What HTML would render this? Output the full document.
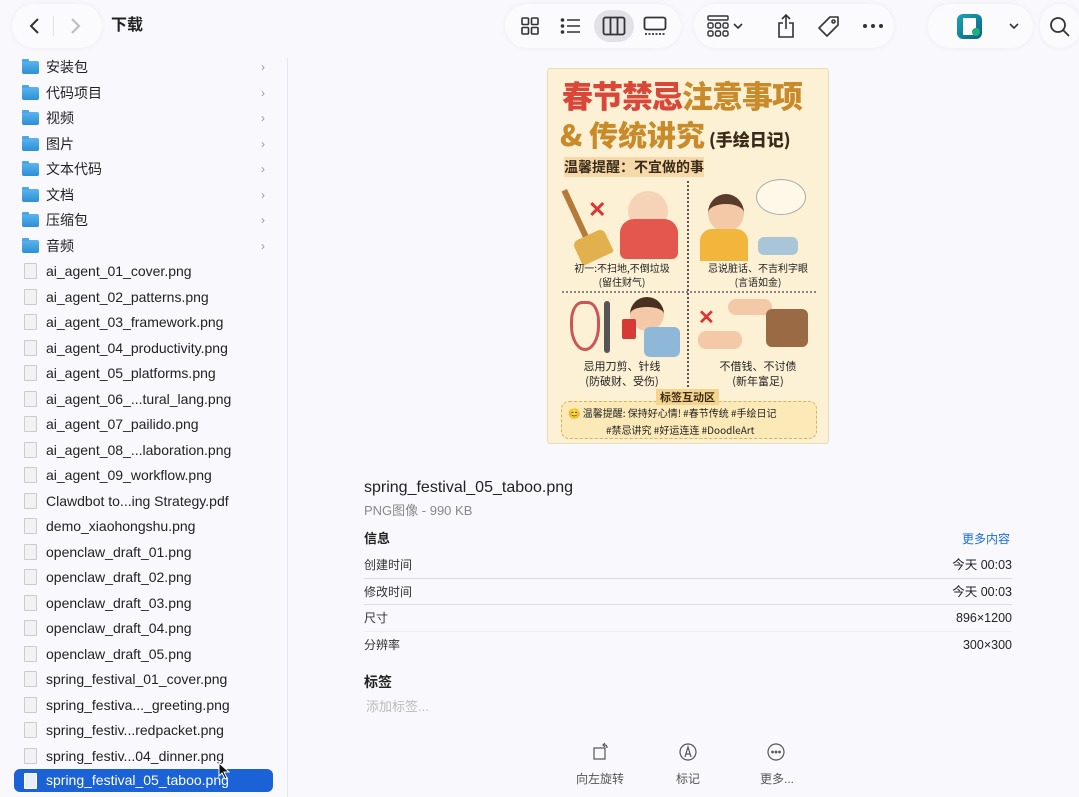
<!DOCTYPE html>
<html><head><meta charset="utf-8"><style>
*{margin:0;padding:0;box-sizing:border-box}
body{width:1079px;height:797px;background:#f9f9fd;font-family:"Liberation Sans","Noto Sans CJK SC",sans-serif;color:#222;position:relative;overflow:hidden}
.a{position:absolute}
.row{position:absolute;left:0;width:287px;height:24px;font-size:14px;line-height:24px}
.row .t{position:absolute;left:46px;top:0;color:#222;white-space:nowrap}
.row .fold{position:absolute;left:22px;top:6px;width:17px;height:13px;background:linear-gradient(#5ab4ee,#2e8fd6);border-radius:2px}
.row .fold:before{content:"";position:absolute;left:0;top:-2px;width:7px;height:3px;background:#4aa6e6;border-radius:1px 1px 0 0}
.row .doc{position:absolute;left:24px;top:4px;width:13px;height:16px;border:1px solid #ccc;background:#f2f2f4;border-radius:1px}
.row .chev{position:absolute;left:261px;top:0;color:#999;font-size:12px}
.sel{background:#1a62d6;border-radius:6px;left:14px;width:259px}
.sel .t{left:32px;color:#fff}
.sel .doc{left:10px;background:#e8eefa;border-color:#fff}
.lbl{font-size:12px;color:#333;line-height:16px}
.val{font-size:12.5px;color:#222;position:absolute;right:67px;line-height:16px}
.line{position:absolute;left:364px;width:648px;height:1px;background:#ddd}
.p{position:absolute;font-family:"Noto Sans CJK SC",sans-serif;white-space:nowrap}
</style></head><body>
<div class="a" style="left:12px;top:4px;width:90px;height:44px;border-radius:22px;background:#fbfbfe;box-shadow:0 0 6px rgba(0,0,0,.06)"></div>
<svg class="a" style="left:27px;top:17px" width="16" height="18"><path d="M11 2 L4 9 L11 16" stroke="#333" stroke-width="2" fill="none"/></svg>
<div class="a" style="left:53px;top:16px;width:1px;height:20px;background:#e2e2e6"></div>
<svg class="a" style="left:67px;top:17px" width="16" height="18"><path d="M5 2 L12 9 L5 16" stroke="#bbb" stroke-width="2" fill="none"/></svg>
<div class="a" style="left:111px;top:16px;font-size:16px;font-weight:bold;line-height:20px">下载</div>
<div class="a" style="left:505px;top:4px;width:176px;height:44px;border-radius:22px;background:#fbfbfe;box-shadow:0 0 6px rgba(0,0,0,.06)"></div>
<div class="a" style="left:694px;top:4px;width:200px;height:44px;border-radius:22px;background:#fbfbfe;box-shadow:0 0 6px rgba(0,0,0,.06)"></div>
<div class="a" style="left:928px;top:4px;width:105px;height:44px;border-radius:22px;background:#fbfbfe;box-shadow:0 0 6px rgba(0,0,0,.06)"></div>
<div class="a" style="left:1040px;top:4px;width:40px;height:44px;border-radius:22px;background:#fbfbfe;box-shadow:0 0 6px rgba(0,0,0,.06)"></div>
<div class="a" style="left:594px;top:10px;width:40px;height:32px;border-radius:16px;background:#e1e1e6"></div>
<svg class="a" style="left:520px;top:16px" width="20" height="20" fill="none" stroke="#333" stroke-width="1.6"><rect x="2" y="2" width="6.5" height="6.5" rx="1"/><rect x="11.5" y="2" width="6.5" height="6.5" rx="1"/><rect x="2" y="11.5" width="6.5" height="6.5" rx="1"/><rect x="11.5" y="11.5" width="6.5" height="6.5" rx="1"/></svg>
<svg class="a" style="left:560px;top:16px" width="22" height="20" stroke="#333" stroke-width="1.6"><path d="M7 4H20M7 10H20M7 16H20"/><circle cx="2.5" cy="4" r="1" fill="#333"/><circle cx="2.5" cy="10" r="1" fill="#333"/><circle cx="2.5" cy="16" r="1" fill="#333"/></svg>
<svg class="a" style="left:602px;top:16px" width="24" height="20" fill="none" stroke="#333" stroke-width="1.8"><rect x="1.5" y="1.5" width="21" height="17" rx="2"/><path d="M8.5 2V18M15.5 2V18"/></svg>
<svg class="a" style="left:643px;top:16px" width="24" height="20" fill="none" stroke="#333" stroke-width="1.8"><rect x="1.5" y="1.5" width="21" height="12" rx="2"/><path d="M2 18H22" stroke-dasharray="2 1.5"/></svg>
<svg class="a" style="left:707px;top:15px" width="22" height="22" fill="none" stroke="#333" stroke-width="1.4"><rect x="1" y="1" width="20" height="4" rx="1"/><rect x="1" y="8" width="5" height="5" rx="1.5"/><rect x="8.5" y="8" width="5" height="5" rx="1.5"/><rect x="16" y="8" width="5" height="5" rx="1.5"/><rect x="1" y="16" width="5" height="5" rx="1.5"/><rect x="8.5" y="16" width="5" height="5" rx="1.5"/><rect x="16" y="16" width="5" height="5" rx="1.5"/></svg>
<svg class="a" style="left:733px;top:22px" width="10" height="8"><path d="M1 2L5 6L9 2" stroke="#333" stroke-width="1.6" fill="none"/></svg>
<svg class="a" style="left:776px;top:13px" width="20" height="26" fill="none" stroke="#333" stroke-width="1.6"><path d="M10 2V16M6 6L10 2L14 6M7 10H3V24H17V10H13"/></svg>
<svg class="a" style="left:817px;top:15px" width="24" height="24" fill="none" stroke="#333" stroke-width="1.6"><path d="M13 2H21V10L10 21L2 13Z" stroke-linejoin="round"/><circle cx="16.5" cy="6.5" r="1.5"/></svg>
<svg class="a" style="left:862px;top:23px" width="22" height="6" fill="#333"><circle cx="3" cy="3" r="2"/><circle cx="11" cy="3" r="2"/><circle cx="19" cy="3" r="2"/></svg>
<div class="a" style="left:957px;top:14px;width:25px;height:25px;border-radius:6px;background:linear-gradient(135deg,#19a7b0,#0c5f8a)"></div>
<div class="a" style="left:963px;top:18px;width:13px;height:17px;background:#fff;border-radius:1px"></div>
<div class="a" style="left:972px;top:28px;width:8px;height:8px;border-radius:50%;background:#1eb07a"></div>
<svg class="a" style="left:1009px;top:22px" width="10" height="8"><path d="M1 2L5 6L9 2" stroke="#333" stroke-width="1.6" fill="none"/></svg>
<svg class="a" style="left:1049px;top:16px" width="22" height="22" fill="none" stroke="#333" stroke-width="1.8"><circle cx="9" cy="9" r="7"/><path d="M14 14L20 20"/></svg>
<div class="a" style="left:287px;top:58px;width:1px;height:739px;background:#e6e6ee"></div>
<div class="row" style="top:55px"><div class="fold"></div><span class="t">安装包</span><span class="chev">›</span></div>
<div class="row" style="top:81px"><div class="fold"></div><span class="t">代码项目</span><span class="chev">›</span></div>
<div class="row" style="top:106px"><div class="fold"></div><span class="t">视频</span><span class="chev">›</span></div>
<div class="row" style="top:132px"><div class="fold"></div><span class="t">图片</span><span class="chev">›</span></div>
<div class="row" style="top:157px"><div class="fold"></div><span class="t">文本代码</span><span class="chev">›</span></div>
<div class="row" style="top:183px"><div class="fold"></div><span class="t">文档</span><span class="chev">›</span></div>
<div class="row" style="top:208px"><div class="fold"></div><span class="t">压缩包</span><span class="chev">›</span></div>
<div class="row" style="top:234px"><div class="fold"></div><span class="t">音频</span><span class="chev">›</span></div>
<div class="row" style="top:259px"><div class="doc"></div><span class="t">ai_agent_01_cover.png</span></div>
<div class="row" style="top:285px"><div class="doc"></div><span class="t">ai_agent_02_patterns.png</span></div>
<div class="row" style="top:310px"><div class="doc"></div><span class="t">ai_agent_03_framework.png</span></div>
<div class="row" style="top:336px"><div class="doc"></div><span class="t">ai_agent_04_productivity.png</span></div>
<div class="row" style="top:361px"><div class="doc"></div><span class="t">ai_agent_05_platforms.png</span></div>
<div class="row" style="top:387px"><div class="doc"></div><span class="t">ai_agent_06_...tural_lang.png</span></div>
<div class="row" style="top:412px"><div class="doc"></div><span class="t">ai_agent_07_pailido.png</span></div>
<div class="row" style="top:438px"><div class="doc"></div><span class="t">ai_agent_08_...laboration.png</span></div>
<div class="row" style="top:463px"><div class="doc"></div><span class="t">ai_agent_09_workflow.png</span></div>
<div class="row" style="top:489px"><div class="doc"></div><span class="t">Clawdbot to...ing Strategy.pdf</span></div>
<div class="row" style="top:514px"><div class="doc"></div><span class="t">demo_xiaohongshu.png</span></div>
<div class="row" style="top:540px"><div class="doc"></div><span class="t">openclaw_draft_01.png</span></div>
<div class="row" style="top:565px"><div class="doc"></div><span class="t">openclaw_draft_02.png</span></div>
<div class="row" style="top:591px"><div class="doc"></div><span class="t">openclaw_draft_03.png</span></div>
<div class="row" style="top:616px"><div class="doc"></div><span class="t">openclaw_draft_04.png</span></div>
<div class="row" style="top:642px"><div class="doc"></div><span class="t">openclaw_draft_05.png</span></div>
<div class="row" style="top:667px"><div class="doc"></div><span class="t">spring_festival_01_cover.png</span></div>
<div class="row" style="top:693px"><div class="doc"></div><span class="t">spring_festiva..._greeting.png</span></div>
<div class="row" style="top:718px"><div class="doc"></div><span class="t">spring_festiv...redpacket.png</span></div>
<div class="row" style="top:744px"><div class="doc"></div><span class="t">spring_festiv...04_dinner.png</span></div>
<div class="row sel" style="top:769px;height:23px;line-height:23px"><div class="doc"></div><span class="t">spring_festival_05_taboo.png</span></div>
<svg class="a" style="left:218px;top:762px" width="12" height="18"><path d="M1 1V14L4 11L7 17L9 16L6 10H11Z" fill="#111" stroke="#fff" stroke-width="1"/></svg>
<div class="a" style="left:547px;top:68px;width:282px;height:376px;background:#fcf1d4;border:1px solid #e8dcb8;border-radius:3px;overflow:hidden">
<div class="p" style="left:14px;top:6px;font-size:31px;line-height:40px;font-weight:900;color:#d9473a;letter-spacing:-1px">春节禁忌<span style="color:#c98a2a">注意事项</span></div>
<div class="p" style="left:12px;top:46px;font-size:29px;line-height:38px;font-weight:900;color:#c98a2a">&amp; 传统讲究<span style="font-size:17px;color:#3a2a1a"> (手绘日记)</span></div>
<div class="p" style="left:16px;top:88px;font-size:14px;font-weight:bold;color:#3a2a1a;background:#f5d9a8;line-height:20px">温馨提醒：不宜做的事</div>
<div class="a" style="left:139px;top:112px;width:0;height:210px;border-left:2px dotted #555"></div>
<div class="a" style="left:14px;top:222px;width:254px;border-top:2px dotted #888"></div>
<div class="a" style="left:28px;top:118px;width:6px;height:70px;background:#b47a3a;transform:rotate(-25deg)"></div>
<div class="a" style="left:28px;top:165px;width:34px;height:26px;background:#e2b04c;border-radius:6px 6px 2px 2px;transform:rotate(-25deg)"></div>
<div class="a" style="left:40px;top:128px;font-size:22px;color:#d33;font-weight:bold">✕</div>
<div class="a" style="left:80px;top:122px;width:40px;height:40px;border-radius:50%;background:#f6d2b6"></div>
<div class="a" style="left:72px;top:150px;width:58px;height:40px;border-radius:14px 14px 6px 6px;background:#e3574e"></div>
<div class="a" style="left:160px;top:125px;width:36px;height:38px;border-radius:50%;background:#f3c9a8;border-top:10px solid #5a3a28"></div>
<div class="a" style="left:152px;top:160px;width:48px;height:32px;border-radius:12px 12px 0 0;background:#f2b63c"></div>
<div class="a" style="left:208px;top:110px;width:50px;height:36px;border-radius:50%;background:#fff7e8;border:1px solid #aaa"></div>
<div class="a" style="left:210px;top:168px;width:40px;height:18px;background:#a9c6d8;border-radius:6px"></div>
<div class="p" style="left:18px;top:192px;font-size:10px;color:#222;line-height:14px;text-align:center;width:112px">初一:不扫地,不倒垃圾<br>(留住财气)</div>
<div class="p" style="left:150px;top:192px;font-size:10px;color:#222;line-height:14px;text-align:center;width:120px">忌说脏话、不吉利字眼<br>(言语如金)</div>
<div class="a" style="left:22px;top:232px;width:30px;height:50px;border:3px solid #c55;border-radius:40% 40% 50% 50%;"></div>
<div class="a" style="left:56px;top:232px;width:6px;height:52px;background:#555;border-radius:3px"></div>
<div class="a" style="left:82px;top:228px;width:34px;height:34px;border-radius:50%;background:#f3c9a8;border-top:10px solid #4a3020"></div>
<div class="a" style="left:96px;top:258px;width:36px;height:30px;background:#8fb8d8;border-radius:6px"></div>
<div class="a" style="left:74px;top:250px;width:14px;height:20px;background:#d63a36;border-radius:2px"></div>
<div class="a" style="left:150px;top:236px;font-size:20px;color:#d33;font-weight:bold">✕</div>
<div class="a" style="left:180px;top:230px;width:44px;height:16px;background:#f3c9a8;border-radius:8px"></div>
<div class="a" style="left:150px;top:262px;width:44px;height:18px;background:#f3c9a8;border-radius:8px"></div>
<div class="a" style="left:218px;top:240px;width:42px;height:38px;background:#9a6a44;border-radius:6px"></div>
<div class="p" style="left:18px;top:290px;font-size:11px;color:#222;line-height:15px;text-align:center;width:112px">忌用刀剪、针线<br>(防破财、受伤)</div>
<div class="p" style="left:150px;top:290px;font-size:11px;color:#222;line-height:15px;text-align:center;width:120px">不借钱、不讨债<br>(新年富足)</div>
<div class="a" style="left:13px;top:332px;width:256px;height:38px;border:1px dashed #d9b25a;border-radius:8px;background:#fbeab8"></div>
<div class="p" style="left:108px;top:320px;font-size:11px;font-weight:bold;color:#3a2a1a;background:#f5d58e;padding:0 4px">标签互动区</div>
<div class="p" style="left:20px;top:336px;font-size:10px;color:#222">😊 温馨提醒: 保持好心情! #春节传统 #手绘日记</div>
<div class="p" style="left:58px;top:353px;font-size:10px;color:#222">#禁忌讲究 #好运连连 #DoodleArt</div>
</div>
<div class="a" style="left:364px;top:478px;font-size:16px;color:#222;line-height:20px">spring_festival_05_taboo.png</div>
<div class="a" style="left:364px;top:503px;font-size:13px;color:#888;line-height:16px">PNG图像 - 990 KB</div>
<div class="a" style="left:364px;top:530px;font-size:13px;font-weight:bold;line-height:18px">信息</div>
<div class="a" style="left:962px;top:531px;font-size:12px;color:#1a6ee0;line-height:16px">更多内容</div>
<div class="a lbl" style="left:364px;top:557px">创建时间</div><div class="val" style="top:557px">今天 00:03</div>
<div class="line" style="top:578px"></div>
<div class="a lbl" style="left:364px;top:584px">修改时间</div><div class="val" style="top:584px">今天 00:03</div>
<div class="line" style="top:604px"></div>
<div class="a lbl" style="left:364px;top:610px">尺寸</div><div class="val" style="top:610px">896×1200</div>
<div class="line" style="top:631px;background:#eee"></div>
<div class="a lbl" style="left:364px;top:637px">分辨率</div><div class="val" style="top:637px">300×300</div>
<div class="a" style="left:364px;top:673px;font-size:14px;font-weight:bold;line-height:18px">标签</div>
<div class="a" style="left:366px;top:699px;font-size:13px;color:#bbb;line-height:16px">添加标签...</div>
<svg class="a" style="left:592px;top:742px" width="20" height="20" fill="none" stroke="#555" stroke-width="1.2"><rect x="2" y="6" width="11" height="11"/><path d="M11 3Q15 2 15 6M13 1L11 3L13 5"/></svg>
<div class="a" style="left:576px;top:771px;font-size:12px;color:#555;line-height:16px">向左旋转</div>
<svg class="a" style="left:678px;top:742px" width="20" height="20" fill="none" stroke="#555" stroke-width="1.2"><circle cx="10" cy="10" r="8"/><path d="M7 15L10 5L13 15M8 12H12"/></svg>
<div class="a" style="left:676px;top:771px;font-size:12px;color:#555;line-height:16px">标记</div>
<svg class="a" style="left:766px;top:742px" width="20" height="20" fill="none" stroke="#555" stroke-width="1.2"><circle cx="10" cy="10" r="8"/><circle cx="6.5" cy="10" r=".8" fill="#555"/><circle cx="10" cy="10" r=".8" fill="#555"/><circle cx="13.5" cy="10" r=".8" fill="#555"/></svg>
<div class="a" style="left:760px;top:771px;font-size:12px;color:#555;line-height:16px">更多...</div>
</body></html>
